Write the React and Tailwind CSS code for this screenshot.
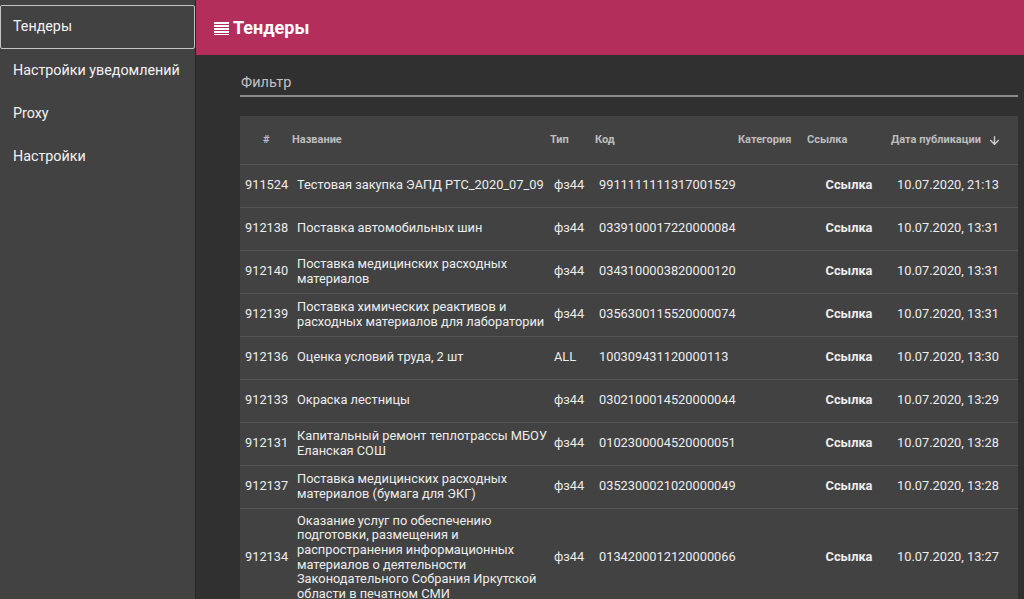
import React from "react";
import { ArrowDown } from "lucide-react";

const rows = [
  ["911524", "Тестовая закупка ЭАПД РТС_2020_07_09", "фз44", "9911111111317001529", "10.07.2020, 21:13"],
  ["912138", "Поставка автомобильных шин", "фз44", "0339100017220000084", "10.07.2020, 13:31"],
  ["912140", "Поставка медицинских расходных материалов", "фз44", "0343100003820000120", "10.07.2020, 13:31"],
  ["912139", "Поставка химических реактивов и расходных материалов для лаборатории", "фз44", "0356300115520000074", "10.07.2020, 13:31"],
  ["912136", "Оценка условий труда, 2 шт", "ALL", "100309431120000113", "10.07.2020, 13:30"],
  ["912133", "Окраска лестницы", "фз44", "0302100014520000044", "10.07.2020, 13:29"],
  ["912131", "Капитальный ремонт теплотрассы МБОУ Еланская СОШ", "фз44", "0102300004520000051", "10.07.2020, 13:28"],
  ["912137", "Поставка медицинских расходных материалов (бумага для ЭКГ)", "фз44", "0352300021020000049", "10.07.2020, 13:28"],
  [
    "912134",
    "Оказание услуг по обеспечению подготовки, размещения и распространения информационных материалов о деятельности Законодательного Собрания Иркутской области в печатном СМИ",
    "фз44",
    "0134200012120000066",
    "10.07.2020, 13:27",
  ],
];

const menu = ["Тендеры", "Настройки уведомлений", "Proxy", "Настройки"];

const MenuIcon = () => (
  <svg width="15" height="14" viewBox="0 0 15 14" fill="#fff">
    <rect x="0" y="1" width="15" height="2" />
    <rect x="0" y="4" width="15" height="2" />
    <rect x="0" y="7" width="15" height="2" />
    <rect x="0" y="10" width="15" height="2" />
    <rect x="0" y="13" width="15" height="1.5" />
  </svg>
);

export default function App() {
  return (
    <div
      className="flex h-[599px] w-[1024px] overflow-hidden bg-[#303030] text-white"
      style={{ fontFamily: "Roboto, 'Liberation Sans', sans-serif" }}
    >
      {/* Sidebar */}
      <aside className="w-[196px] shrink-0 border-r border-[#262626] bg-[#424242] pt-[5px]">
        {menu.map((item, i) => (
          <div
            key={item}
            className={
              i === 0
                ? "flex h-[44px] items-center rounded-[2px] border border-[#c4c4c4] pl-[12px] text-[14.3px] text-[#f2f2f2]"
                : "flex h-[43px] items-center pl-[13px] text-[14.3px] text-[#f2f2f2]"
            }
          >
            {item}
          </div>
        ))}
      </aside>

      {/* Main */}
      <div className="flex min-w-0 flex-1 flex-col">
        <header className="flex h-[55px] shrink-0 items-center gap-[4px] bg-[#b42e5b] pl-[18px]">
          <MenuIcon />
          <span className="text-[18px] font-bold text-white">Тендеры</span>
        </header>

        <div className="flex-1 pl-[44px] pr-[6px] pt-[17px]">
          <div className="border-b-2 border-[#8a8a8a] pb-[1px] pl-[1px] text-[14.5px] text-[#c2c2c2]">
            Фильтр
          </div>

          <div className="mt-[19px] bg-[#424242]">
            <div className="flex h-[49px] items-center border-b border-[#555555] pt-[1px] text-[11px] font-bold text-[#bdbdbd]">
              <div className="w-[52px] shrink-0 pl-[23px]">#</div>
              <div className="w-[258px] shrink-0">Название</div>
              <div className="w-[45px] shrink-0">Тип</div>
              <div className="w-[143px] shrink-0">Код</div>
              <div className="w-[69px] shrink-0">Категория</div>
              <div className="w-[84px] shrink-0">Ссылка</div>
              <div className="flex flex-1 items-center gap-[7px]">
                Дата публикации
                <ArrowDown size={13} strokeWidth={2.5} color="#d0d0d0" />
              </div>
            </div>

            {rows.map((r) => (
              <div
                key={r[0]}
                className="flex min-h-[43px] items-center border-b border-[#555555] py-[5px] text-[12.8px] leading-[14.6px] text-[#ededed]"
              >
                <div className="w-[52px] shrink-0 pl-[5px]">{r[0]}</div>
                <div className="w-[258px] shrink-0 pl-[5px]">{r[1]}</div>
                <div className="w-[45px] shrink-0 pl-[4px]">{r[2]}</div>
                <div className="w-[143px] shrink-0 pl-[4px]">{r[3]}</div>
                <div className="w-[69px] shrink-0"></div>
                <div className="w-[84px] shrink-0 text-center font-bold">Ссылка</div>
                <div className="flex-1 pl-[6px]">{r[4]}</div>
              </div>
            ))}
          </div>
        </div>
      </div>
    </div>
  );
}
